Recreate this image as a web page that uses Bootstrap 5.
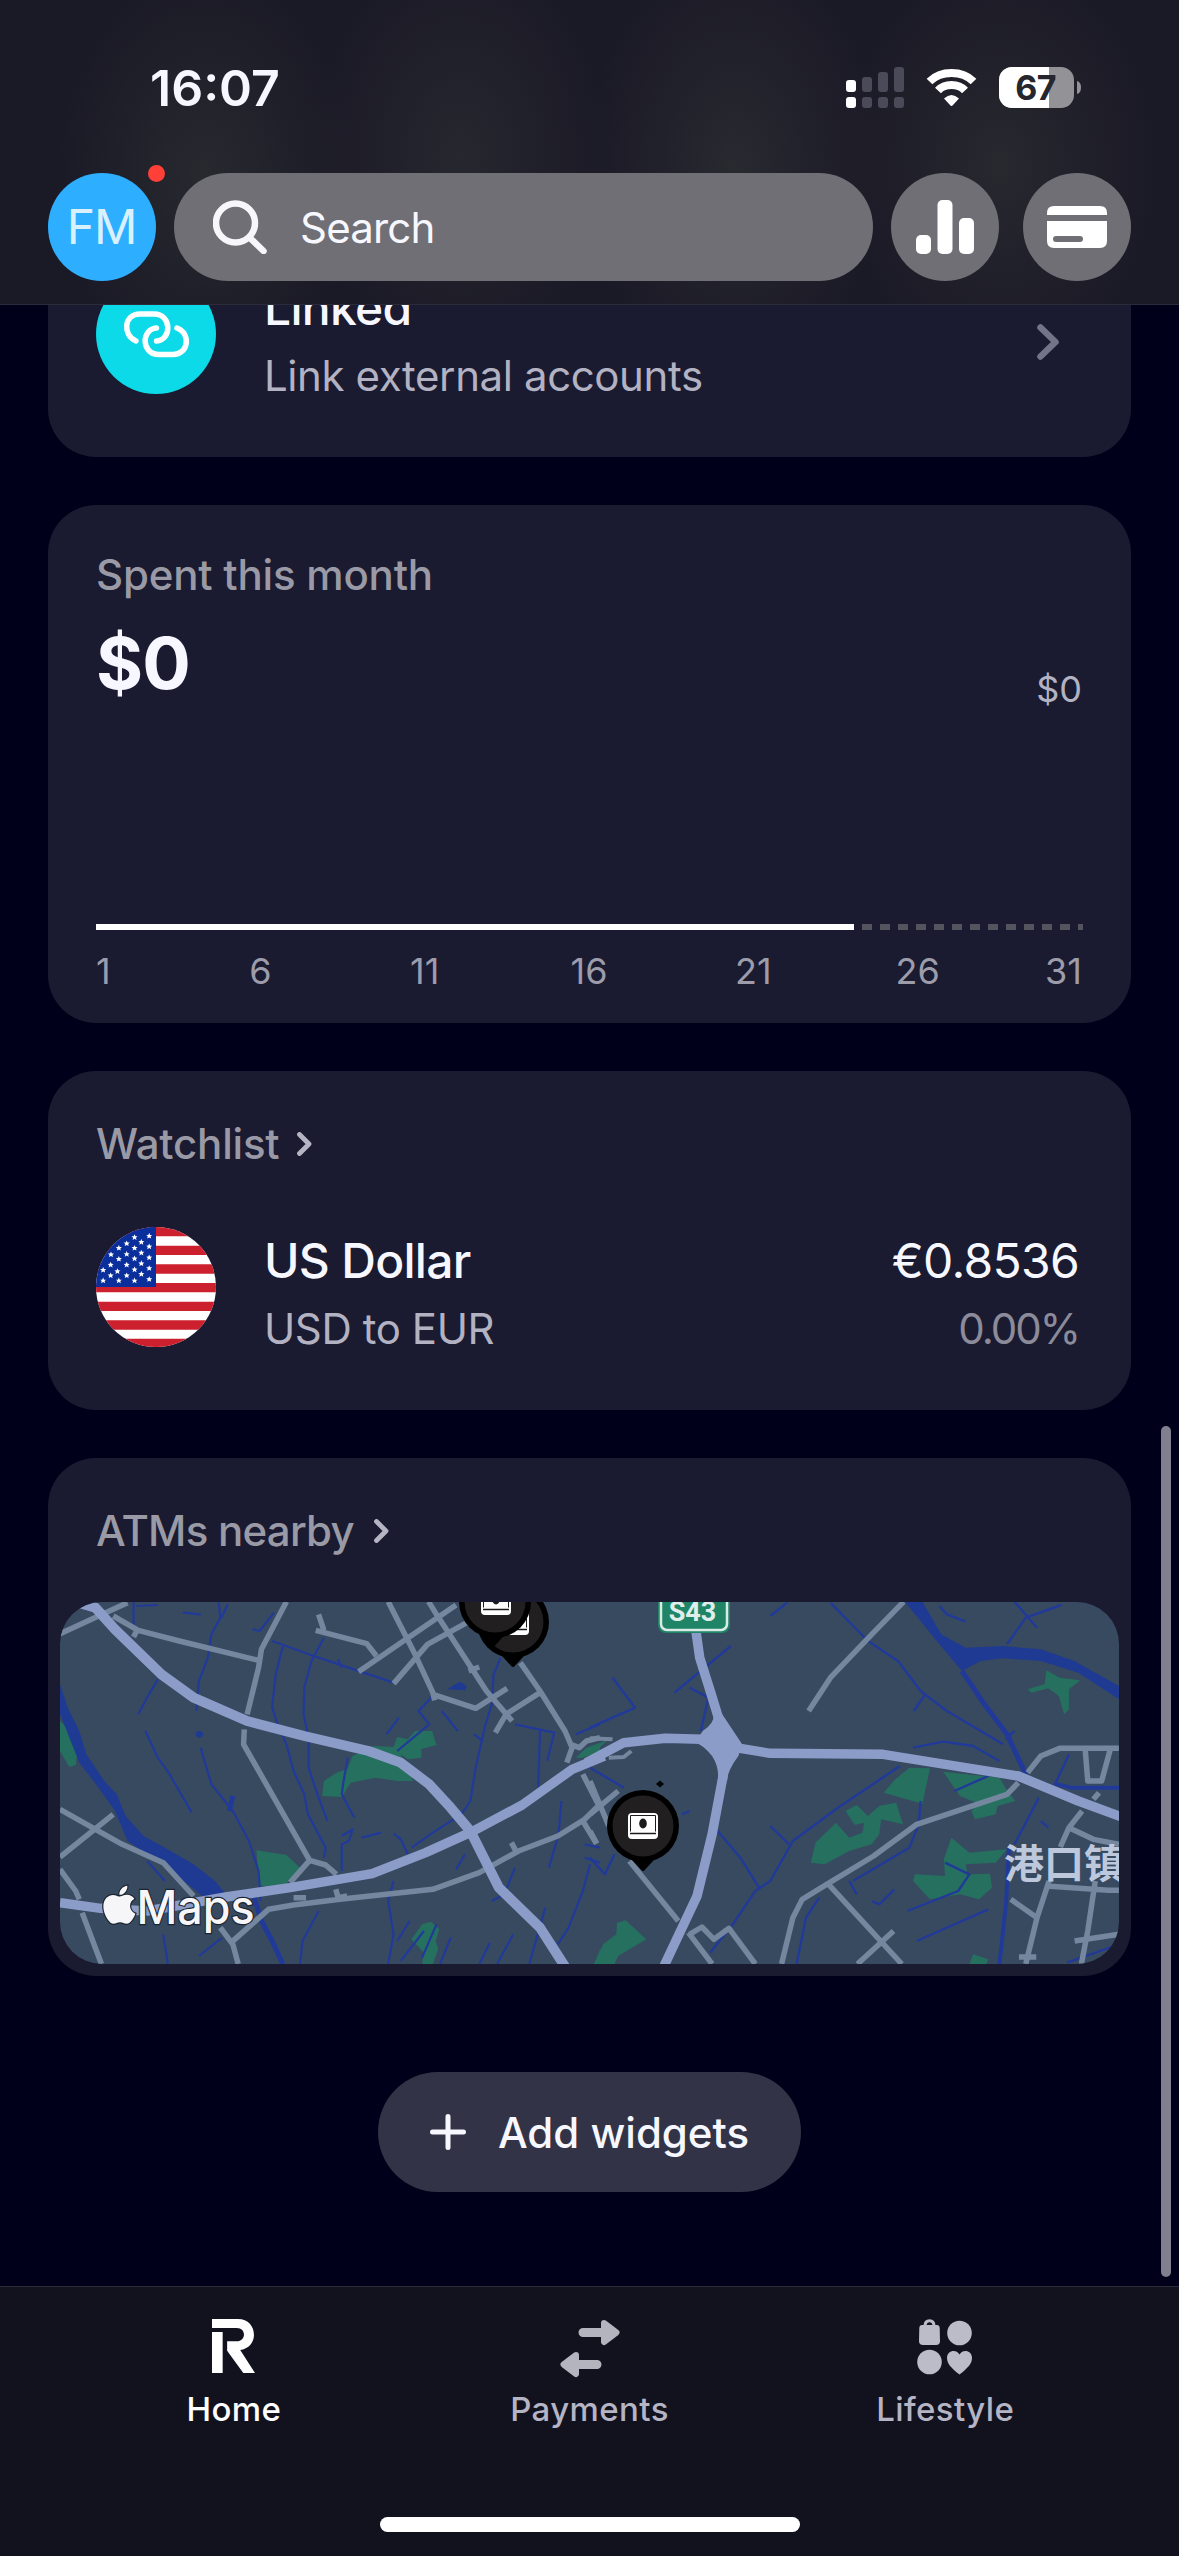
<!DOCTYPE html>
<html lang="en">
<head>
<meta charset="utf-8">
<meta name="viewport" content="width=device-width, initial-scale=1">
<title>Home</title>
<link rel="stylesheet" href="https://cdn.jsdelivr.net/npm/bootstrap@5.3.0/dist/css/bootstrap.min.css">
<style>
  body { background:#00001a; color:#f7f7ff; font-family:Inter,"Noto Sans CJK SC",sans-serif; height:2556px; overflow:hidden; }
  svg { display:block; flex:none; }
  .app-head { height:305px; padding-top:58px; border-bottom:1px solid #2b2b3a;
    background:
      radial-gradient(ellipse 150px 210px at 205px 175px,#28292f 0,transparent 100%),
      radial-gradient(ellipse 150px 210px at 460px 155px,#27272f 0,transparent 100%),
      radial-gradient(ellipse 150px 220px at 735px 165px,#292930 0,transparent 100%),
      radial-gradient(ellipse 160px 210px at 1000px 165px,#28282f 0,transparent 100%),
      #1a1926; }
  .status-row { height:60px; padding:0 98px 0 150px; margin-bottom:55px; }
  .clock { font-size:50px; font-weight:600; line-height:60px; letter-spacing:0; }
  .top-row { padding:0 48px; }
  .round-btn { width:108px; height:108px; background:#6f6f75; border-radius:50%; }
  .avatar { background:#2eaeff; color:#d9f1ff; font-size:48px; letter-spacing:-1px; margin-right:18px; padding-right:1px; }
  .alert-dot { width:17px; height:17px; background:#ff4038; border-radius:50%; top:-8px; right:-9px; }
  .search-pill { height:108px; border-radius:54px; background:#6f6f75; padding-left:39px; font-size:42px; margin-right:18px; gap:33px; letter-spacing:-.8px; }
  .feed { overflow:hidden; }
  .panel { display:flow-root; background:#1a1a30; border-radius:48px; margin:0 48px 48px; padding:0 48px; }
  .panel-linked { height:152px; border-top-left-radius:0; border-top-right-radius:0; }
  .panel-linked .item-row { margin-top:-31px; }
  .panel-spent { height:518px; padding-top:40px; }
  .panel-watch { height:339px; padding-top:43px; }
  .panel-atm { height:518px; padding:43px 12px 0; margin-bottom:96px; }
  .disc { width:120px; height:120px; border-radius:50%; background:#0cdae8; margin-right:48px; }
  .t-main { font-size:48px; line-height:68px; font-weight:500; letter-spacing:-.7px; }
  .t-sub { font-size:42px; line-height:68px; color:#b2b2c2; letter-spacing:-.4px; }
  .t-change { color:#8b8b9a; letter-spacing:-2px; }
  .t-head { font-size:42px; line-height:60px; font-weight:500; color:#9a9aa6; letter-spacing:-.2px; }
  .t-tight { letter-spacing:-.75px; }
  .watch-row { margin-top:53px; }
  .amount { font-size:72px; line-height:88px; font-weight:700; letter-spacing:-1px; }
  .amount-row { margin-top:14px; height:92px; }
  .amount-small { font-size:36px; line-height:44px; color:#b2b2c2; padding-right:1px; }
  .plot { margin-top:213px; height:6px; }
  .plot-done { background:#fff; }
  .plot-rest { background:repeating-linear-gradient(90deg,transparent 0 8px,#54545e 8px 18px); flex:1; }
  .ticks { margin-top:19px; font-size:36px; line-height:44px; color:#9c9caa; text-align:center; padding-right:1px; }
  .ticks > span { flex:2 1 0; }
  .ticks > span:first-child { flex:1 1 0; text-align:left; }
  .ticks > span:last-child { flex:1 1 0; text-align:right; }
  .map { height:362px; margin-top:41px; border-radius:42px; overflow:hidden; background:#384a60; }
  .add-btn { width:423px; height:120px; border-radius:60px; background:#333347; font-size:42px; font-weight:500; gap:32px; letter-spacing:0; }
  .scroll-thumb { width:10px; height:851px; border-radius:5px; background:#7f7f8f; right:8px; top:1426px; }
  .tabs { height:270px; background:#12121f; border-top:1px solid #2a2a38; padding:0 56px; }
  .tab-item { font-size:33px; line-height:44px; font-weight:500; color:#b4b4c4; letter-spacing:.4px; }
  .tab-icon { height:76px; padding-top:8px; }
  .tab-row { height:212px; }
  .home-bar { width:420px; height:15px; border-radius:8px; background:#fff; margin:18px auto 0; }
  .nss * { vector-effect:non-scaling-stroke; }
</style>
</head>
<body class="d-flex flex-column position-relative">
<header class="app-head flex-shrink-0">
  <div class="status-row d-flex align-items-center justify-content-between">
    <span class="clock">16:07</span>
    <svg width="235" height="42" viewBox="846 67 235 42">
      <g fill="#fff"><rect x="846" y="80" width="10" height="12" rx="3"/><rect x="846" y="97" width="10" height="11" rx="3"/></g>
      <g fill="#4b4a58"><rect x="862" y="77" width="10" height="15" rx="3"/><rect x="878" y="72" width="10" height="20" rx="3"/><rect x="894" y="67" width="10" height="25" rx="3"/><rect x="862" y="97" width="10" height="11" rx="3"/><rect x="878" y="97" width="10" height="11" rx="3"/><rect x="894" y="97" width="10" height="11" rx="3"/></g>
      <g fill="none" stroke="#fff" stroke-width="8"><path d="M929.5 81.5Q938 73 951.500 73T973.500 81.500"/><path d="M938 90.500Q943 85 951.500 85T965 90.500"/></g>
      <path d="M944 98.500Q951.500 91.500 959 98.500L953 105Q951.500 107 950 105Z" fill="#fff"/>
      <clipPath id="batt"><rect x="999" y="67" width="75" height="41" rx="13"/></clipPath>
      <g clip-path="url(#batt)"><rect x="999" y="67" width="75" height="41" fill="#929297"/><rect x="999" y="67" width="50" height="41" fill="#fff"/></g>
      <path d="M1077 81Q1081 82 1081 87.500T1077 94Z" fill="#929297"/>
      <text x="1035.500" y="100" text-anchor="middle" font-family="Inter,sans-serif" font-size="34" font-weight="700" letter-spacing="-.6" fill="#26262e">67</text>
    </svg>
  </div>
  <div class="top-row d-flex align-items-center">
    <div class="round-btn avatar d-flex align-items-center justify-content-center position-relative flex-shrink-0">FM<span class="alert-dot position-absolute"></span></div>
    <div class="search-pill d-flex align-items-center flex-grow-1">
      <svg width="54" height="54" viewBox="0 0 54 54" fill="none" stroke="#f7f7fb" stroke-width="6.500" stroke-linecap="round"><circle cx="22.500" cy="23" r="19.500"/><path d="M37 38L50.500 51"/></svg>
      <span>Search</span>
    </div>
    <div class="round-btn d-flex align-items-center justify-content-center flex-shrink-0 me-4">
      <svg width="58" height="54" viewBox="0 0 58 54" fill="#fff"><rect y="35" width="15" height="19" rx="5"/><rect x="21.500" width="15" height="54" rx="5"/><rect x="43" y="18" width="15" height="36" rx="5"/></svg>
    </div>
    <div class="round-btn d-flex align-items-center justify-content-center flex-shrink-0">
      <svg width="60" height="42" viewBox="0 0 60 42"><path d="M0 9V7Q0 0 7 0H53Q60 0 60 7V9ZM0 15H60V35Q60 42 53 42H7Q0 42 0 35Z" fill="#fff"/><path d="M9 33H33" stroke="#6f6f75" stroke-width="6" stroke-linecap="round"/></svg>
    </div>
  </div>
</header>

<main class="feed flex-grow-1">
  <section class="panel panel-linked">
    <div class="item-row d-flex align-items-start">
      <div class="disc d-flex align-items-center justify-content-center flex-shrink-0">
        <svg width="67" height="47" viewBox="0 0 67 47" fill="none" stroke="#fff" stroke-width="5.500" stroke-linecap="round"><path d="M13 30C-1 24 1 3 17 3H31C49 3 49 29 33.500 30"/><path d="M54 17C68 22 66 43.500 50 43.500H36C18 43.500 18 18 33.500 17"/></svg>
      </div>
      <div class="flex-grow-1"><div class="t-main">Linked</div><div class="t-sub">Link external accounts</div></div>
      <svg class="align-self-center me-4" width="22" height="36" viewBox="0 0 22 36" fill="none" stroke="#747488" stroke-width="6.500" stroke-linecap="round" stroke-linejoin="round"><path d="M3.500 3.500L18.500 18L3.500 32.500"/></svg>
    </div>
  </section>

  <section class="panel panel-spent">
    <div class="t-head">Spent this month</div>
    <div class="amount-row d-flex justify-content-between">
      <span class="amount">$0</span><span class="amount-small align-self-end">$0</span>
    </div>
    <div class="plot d-flex"><div class="plot-done" style="width:76.800%"></div><div class="plot-rest"></div></div>
    <div class="ticks d-flex"><span>1</span><span>6</span><span>11</span><span>16</span><span>21</span><span>26</span><span>31</span></div>
  </section>

  <section class="panel panel-watch">
    <div class="t-head d-flex align-items-center">Watchlist
      <svg class="ms-3" width="18" height="24" viewBox="-2 0 18 24" fill="none" stroke="#b4b4c4" stroke-width="4.800" stroke-linecap="round" stroke-linejoin="round"><path d="M2.500 2.500L12 12L2.500 21.500"/></svg></div>
    <div class="watch-row d-flex align-items-start">
      <svg class="me-5" width="120" height="120" viewBox="0 0 120 120">
        <defs><clipPath id="flagc"><circle cx="60" cy="60" r="60"/></clipPath>
        <path id="st" fill="#fff" d="M0-9L2.500-3L8.500-2.800L4 1.200L5.500 7.500L0 4.200L-5.500 7.500L-4 1.200L-8.500-2.800L-2.500-3Z"/></defs>
        <g clip-path="url(#flagc)"><rect width="120" height="120" fill="#fff"/>
          <path d="M0 4.500H120M0 23.300H120M0 42H120M0 60.700H120M0 79.400H120M0 98H120M0 116.500H120" stroke="#cc202e" stroke-width="9.300"/>
          <rect width="60" height="60" fill="#0a2f9c"/>
          <g transform="scale(.357 .344) translate(-157 -482)">
            <use href="#st" x="265" y="512"/><use href="#st" x="306" y="508"/><use href="#st" x="284" y="526"/><use href="#st" x="243" y="530"/><use href="#st" x="221" y="543"/><use href="#st" x="265" y="543"/><use href="#st" x="306" y="539"/><use href="#st" x="199" y="562"/><use href="#st" x="243" y="561"/><use href="#st" x="284" y="557"/><use href="#st" x="221" y="575"/><use href="#st" x="265" y="574"/><use href="#st" x="306" y="571"/><use href="#st" x="198" y="592"/><use href="#st" x="243" y="592"/><use href="#st" x="284" y="588"/><use href="#st" x="177" y="607"/><use href="#st" x="217" y="611"/><use href="#st" x="265" y="606"/><use href="#st" x="306" y="602"/><use href="#st" x="198" y="623"/><use href="#st" x="243" y="623"/><use href="#st" x="284" y="619"/><use href="#st" x="177" y="638"/><use href="#st" x="221" y="638"/><use href="#st" x="265" y="638"/><use href="#st" x="306" y="634"/>
          </g></g>
      </svg>
      <div class="flex-grow-1"><div class="t-main">US Dollar</div><div class="t-sub">USD to EUR</div></div>
      <div class="text-end pe-1"><div class="t-main fw-normal">€0.8536</div><div class="t-sub t-change">0.00%</div></div>
    </div>
  </section>

  <section class="panel panel-atm">
    <div class="t-head d-flex align-items-center ps-4"><span class="t-tight ps-2 ms-1">ATMs nearby</span>
      <svg class="ms-3" width="22" height="24" viewBox="-4 0 22 24" fill="none" stroke="#b4b4c4" stroke-width="4.800" stroke-linecap="round" stroke-linejoin="round"><path d="M2.500 2.500L12 12L2.500 21.500"/></svg></div>
    <div class="map">
      <svg width="1059" height="362" viewBox="0 0 1059 362">
        <defs>
          <g id="cash"><rect x="-15" y="-13" width="30" height="26" rx="4" fill="#fff"/><path d="M-13 7.500H13" stroke="#1c1b1c" stroke-width="1.500"/><path d="M-12.500 5.500V-10.500H12.500V5.500" fill="none" stroke="#1c1b1c" stroke-width="1"/><ellipse cx="0" cy="-2.500" rx="3.800" ry="5" fill="#1c1b1c"/></g>
          <g id="pin"><path d="M-12 30L0 43L12 30Z" fill="#000" stroke="#000" stroke-width="4" stroke-linejoin="round"/><circle r="36" fill="#000"/><circle r="30.500" fill="#211f20"/></g>
        </defs>
        <!-- west half -->
        <g class="nss" transform="translate(-20 -21) scale(.35714 .33333)" fill="none" stroke-linejoin="round">
          <g fill="#25705f"><path d="M56 420L75 440L104 520L100 552L82 558L56 510Z"/><path d="M795 600L830 575L860 565L875 525L935 495L990 498L1000 468L1030 475L1050 450L1098 450L1110 492L1068 504L1068 530L1030 535L1010 520L1045 600L1000 600L940 590L870 605L845 648L790 645Z"/><path d="M606 808L690 822L728 860L690 908L640 918L614 912Z"/><path d="M1040 1075L1070 1030L1095 1022L1118 1045L1108 1080L1115 1105L1100 1149L1070 1149L1075 1115Z"/><path d="M1500 530L1530 500L1568 485V510L1520 530Z"/><path d="M1555 1149L1568 1105V1149Z"/></g>
          <g fill="#1f3a92"><path d="M56 310L78 380L110 450L130 520L180 600L215 640L240 705L290 765L350 800L430 850L490 900L520 938L460 950L380 880L300 820L245 780L210 690L150 600L110 545L75 450L56 400Z"/><path d="M1140 325L1175 302L1195 315L1190 328Z"/><circle cx="446" cy="460" r="10"/></g>
          <g stroke="#213a9a" stroke-width="2.200">
            <path d="M500 62L505 110L480 160L470 230L445 300L438 390M526 70L508 110M262 62V140M270 75L330 72M400 95L450 100"/>
            <path d="M330 295L305 340L275 400M295 450L330 530L360 575L425 695M450 500L462 545L480 610L540 690L585 780L612 870L618 960" /><path d="M540 645L530 690M600 950L620 1020L650 1080L680 1149" stroke-width="5"/>
            <path d="M655 95L615 150L595 145M680 195L660 280L650 380L665 430L690 490L710 570L740 640L750 700L800 800L795 830"/>
            <path d="M650 180L780 230L870 262L990 305M795 170L760 240L740 320L738 400L752 470L752 560L780 650L805 720M835 235L845 260"/>
            <path d="M862 530L850 600L845 640L880 710M1290 230L1270 280L1265 370L1245 440L1220 560L1205 660L1180 700L1100 755L1040 800M1000 510L1090 430L1060 390L1100 345M1005 410L970 460M1125 390L1170 450M1330 430L1440 455L1420 540M1400 450L1395 620M1500 460L1568 430M1215 460L1240 480"/>
            <path d="M845 765L875 745L865 780L845 790V870M900 770L955 755M990 758L1010 775L1030 820M1165 865L1190 820M1330 860L1300 940L1265 960M1460 660L1452 760L1425 860M1540 850L1520 930L1480 1040L1450 1090M990 900L975 960L990 1060L975 1149M780 990L735 1080L728 1149M345 1060L358 1149M445 1125L510 1070M300 840L350 900M1035 1020L1000 1080M1110 1030L1070 1130M1150 1070L1120 1149M1325 1060L1280 1149M1415 980L1370 1149M1525 790L1568 800M1525 830L1568 845M1010 1140L1075 1050M1230 1149L1260 1085"/>
          </g>
          <g stroke="#74879f" stroke-width="5.500">
            <path d="M56 158L205 85L245 65M205 105L275 148L390 180L612 238M262 168L275 140M690 62L620 205L612 260L580 400M572 445L570 490L755 838L700 905M755 838L800 852L830 880M780 100L795 148M772 148L915 188L942 225"/>
            <path d="M892 272L1165 72M975 62L1050 220L1100 335L1105 358M1100 340L1220 382L1308 322M1088 62L1110 100L1250 330L1322 420M1400 335L1305 400L1275 455M990 308L1085 190L1195 125M1200 270L1230 258M1345 245L1400 330L1470 450L1490 500L1475 545M1485 490L1510 500L1530 480L1568 470"/>
            <path d="M56 685L230 790L345 845L430 945M56 828L205 700M56 865L100 930L110 955M118 995L172 1149M505 1040L540 1090L555 1149M535 1085L640 985L710 972L840 955L1100 925L1230 875L1340 810L1450 765L1525 715L1568 670M710 950L745 950M828 925L835 950L860 945M1320 785L1335 815M1520 580L1568 680M1520 720L1558 788"/>
          </g>
          <g stroke="#8c9cc8" stroke-width="9">
            <path d="M110 66L155 80L210 145L340 280L430 350L580 420L740 465L920 510L1010 545L1090 610L1150 680L1205 750L1285 920L1400 1040L1472 1160" stroke-width="10"/>
            <path d="M56 965L170 982L300 990L520 948L700 920L930 878L1080 815L1210 752L1350 672L1490 565L1580 525" stroke-width="9.500"/>
          </g>
        </g>
        <!-- east half -->
        <g class="nss" transform="translate(530 -21) scale(.37566 .33333)" fill="none" stroke-linejoin="round">
          <g fill="#25705f"><path d="M0 500L50 475L0 525Z"/><path d="M10 1149L35 1090L70 1060L72 1025L95 1018L150 1075L75 1125L65 1149Z"/><path d="M782 635L810 598L850 560L905 562L885 668Z"/><path d="M940 572L1090 590L1108 625L1132 660L1085 675L1080 700L1025 715L1015 690L1035 668L985 645Z"/><path d="M680 690L710 672L740 705L770 675L815 665L833 730L775 715L770 760L750 790L690 810L625 850L588 845L600 785L655 725L690 770L725 755L730 725L705 732Z"/><path d="M942 835L962 770L1010 815L1110 805L1080 845L1000 850L1005 880L1065 878L1070 920L1035 955L985 940L905 955L860 900L865 880L945 885Z"/><path d="M1165 325L1210 310L1215 268L1250 290L1305 298L1275 325L1275 385L1262 400L1248 345L1220 322L1175 335Z"/><path d="M1010 1149L1020 1120L1060 1135L1055 1149Z"/></g>
          <path d="M838 62H885L935 160L1000 200L1100 195L1200 205L1290 240L1408 315V355L1300 275L1200 240L1100 232L1040 240L990 270L930 190Z" fill="#1f3a92"/>
          <g stroke="#213a9a" stroke-width="2.400">
            <path d="M990 270L1050 370L1110 460L1160 580" stroke-width="5"/><path d="M1235 608L1280 620L1408 620M1115 800L1108 960L1090 1149" stroke-width="4"/>
            <path d="M1195 650L1130 790M640 65L740 180L820 240L880 330L950 390L1100 490M892 340L862 390M860 500L940 482L1020 495L1090 540M825 555L660 680L540 780L480 900L440 930L380 1030L320 1115M480 735L530 790M340 750L400 830L450 920"/>
            <path d="M60 290L120 380L0 440M375 195L225 335M265 320L315 350L295 450M525 65L480 105M930 75L950 100L1000 122M1255 72L1160 110L1110 190M1130 62L1190 140M880 660L875 730L850 800L700 900M610 950L575 1010L550 1149M690 900L710 940M750 960L770 970L810 925M870 1080L1060 985M845 990L980 930L1010 880L945 845M970 630L1060 585M1275 520L1240 605M1408 1090L1270 1145M1200 720L1220 740M0 560L90 620M265 690L245 700M0 830L40 880L65 820M1130 450L1105 475"/>
          </g>
          <g stroke="#74879f" stroke-width="5.500">
            <path d="M835 62L750 160L640 290L582 390M1140 605L1110 640L870 730L755 825L630 910L565 955L540 1010L510 1149M635 910L830 1149M712 1149L808 1050M1165 575L1200 525L1250 502H1408M1318 502L1325 600H1362L1385 505M1355 635L1340 655M1310 690L1275 740L1252 798M1275 740L1340 775L1408 790M1215 915L1380 928H1408M1222 900L1190 1010L1160 1149M1120 955L1190 1010M1345 900L1325 1050L1308 1149M1290 1080L1408 1060M1142 1128H1188M105 840L235 1020M0 600L50 735M0 700L75 630M0 750L18 788M262 1055L325 1149M265 1060L298 1038L330 1075L370 1042L440 1149"/>
            <path d="M0 472L60 475M50 530L90 528L110 510" stroke-width="4"/>
          </g>
          <path d="M300 450Q330 430 330 400L352 400L405 490L395 525Q365 570 365 600L340 600Q345 560 325 525Q300 490 280 485Z" fill="#8c9cc8"/>
          <g stroke="#8c9cc8" stroke-width="9.500"><path d="M282 150L292 230L320 330L350 440M-10 545L90 485L200 472L300 475L400 502L480 517L780 520L900 542L1140 585L1300 660L1420 710M355 580L325 760L285 945L220 1100L195 1160"/></g>
        </g>
        <!-- route shield -->
        <rect x="598" y="-30" width="72" height="61" rx="8" fill="#208467"/><rect x="601" y="-28" width="66" height="56" rx="6" fill="none" stroke="#d8ebe5" stroke-width="2.500"/>
        <text x="632.500" y="19" text-anchor="middle" font-family="Roboto,sans-serif" font-weight="700" font-size="27" fill="#dfeeea">S43</text>
        <!-- pins -->
        <g transform="translate(453 20)"><use href="#pin"/><use href="#cash" x="1"/></g>
        <g transform="translate(435 0)"><path d="M-16 30L-2 46L12 30Z" fill="#000"/><circle r="36" fill="#000"/><circle r="30.500" fill="#211f20"/><use href="#cash" x="1"/></g>
        <g transform="translate(583 224)"><use href="#pin"/><use href="#cash"/></g>
        <path d="M600 178.500L604 182L600 185.500L596 182Z"/>
        <text x="944" y="276" font-family="'Noto Sans CJK SC',sans-serif" font-weight="700" font-size="40" fill="#bdc8dc">港口镇</text>
        <g fill="#f6f6f8" stroke="#1c2430" stroke-width="2.400" paint-order="stroke"><path transform="translate(43 281) scale(.085)" stroke-width="28" d="M318.700 268.700c-.2-36.700 16.400-64.400 50-84.800-18.800-26.900-47.200-41.700-84.700-44.600-35.500-2.800-74.300 20.700-88.500 20.700-15 0-49.400-19.700-76.400-19.700C63.300 141.200 4 184.800 4 273.500q0 39.300 14.400 81.200c12.800 36.700 59 126.700 107.200 125.200 25.200-.6 43-17.900 75.800-17.900 31.800 0 48.300 17.900 76.400 17.900 48.600-.7 90.400-82.500 102.600-119.300-65.200-30.700-61.700-90-61.700-91.900zm-56.600-164.200c27.300-32.400 24.800-61.900 24-72.500-24.100 1.400-52 16.400-67.900 34.900-17.500 19.800-27.800 44.300-25.600 71.900 26.100 2 49.900-11.400 69.500-34.300z"/>
        <text x="76.500" y="321.500" font-family="Inter,sans-serif" font-weight="500" font-size="47" textLength="118" lengthAdjust="spacingAndGlyphs">Maps</text></g>
      </svg>
    </div>
  </section>

  <div class="add-btn d-flex align-items-center justify-content-center mx-auto">
    <svg width="36" height="36" viewBox="0 0 36 36" stroke="#f7f7ff" stroke-width="5" stroke-linecap="round"><path d="M18 2.500V33.500M2.500 18H33.500"/></svg>
    <span>Add widgets</span>
  </div>
</main>

<nav class="tabs flex-shrink-0">
  <div class="tab-row d-flex text-center pt-4">
    <div class="tab-item text-white" style="flex:1 1 0">
      <div class="tab-icon"><svg class="mx-auto" width="43" height="54" viewBox="328 180 125 162" preserveAspectRatio="none" fill="#fff"><path d="M328 219H359V342H328ZM328 180H403C434 180 450 202 450 228C450 252 433 270 410 273L453 342H419L372 275V247H400C428 247 428 207 400 207H328Z"/></svg></div>Home
    </div>
    <div class="tab-item" style="flex:1 1 0">
      <div class="tab-icon"><svg class="mx-auto" width="62" height="60" viewBox="0 0 62 60" fill="#b4b4bf" stroke="#b4b4bf" stroke-linejoin="round" stroke-linecap="round"><path d="M24 13.500H46M38 45.500H16" stroke-width="9"/><path d="M45 4L57.500 13.500L45 23ZM17 36L4.500 45.500L17 55Z" stroke-width="6"/></svg></div>Payments
    </div>
    <div class="tab-item" style="flex:1 1 0">
      <div class="tab-icon"><svg class="mx-auto" width="56" height="58" viewBox="0 0 56 58" fill="#bcbcc8"><circle cx="42.500" cy="14" r="12.300"/><circle cx="12.500" cy="43" r="12.300"/><path d="M5 6H20Q22.500 6 22.700 9L23 22Q23 26 19 26H6Q2 26 2 22L2.300 9Q2.500 6 5 6Z"/><path d="M8 7Q8 1.700 12.500 1.700T17 7" fill="none" stroke="#bcbcc8" stroke-width="3"/><path d="M42.500 55.500C34 49 30 44.500 30 39C30 31.500 39 29.500 42.500 35.500C46 29.500 55 31.500 55 39C55 44.500 51 49 42.500 55.500Z"/></svg></div>Lifestyle
    </div>
  </div>
  <div class="home-bar"></div>
</nav>
<div class="scroll-thumb position-absolute"></div>
<script src="https://cdn.jsdelivr.net/npm/bootstrap@5.3.0/dist/js/bootstrap.bundle.min.js"></script>
</body>
</html>
